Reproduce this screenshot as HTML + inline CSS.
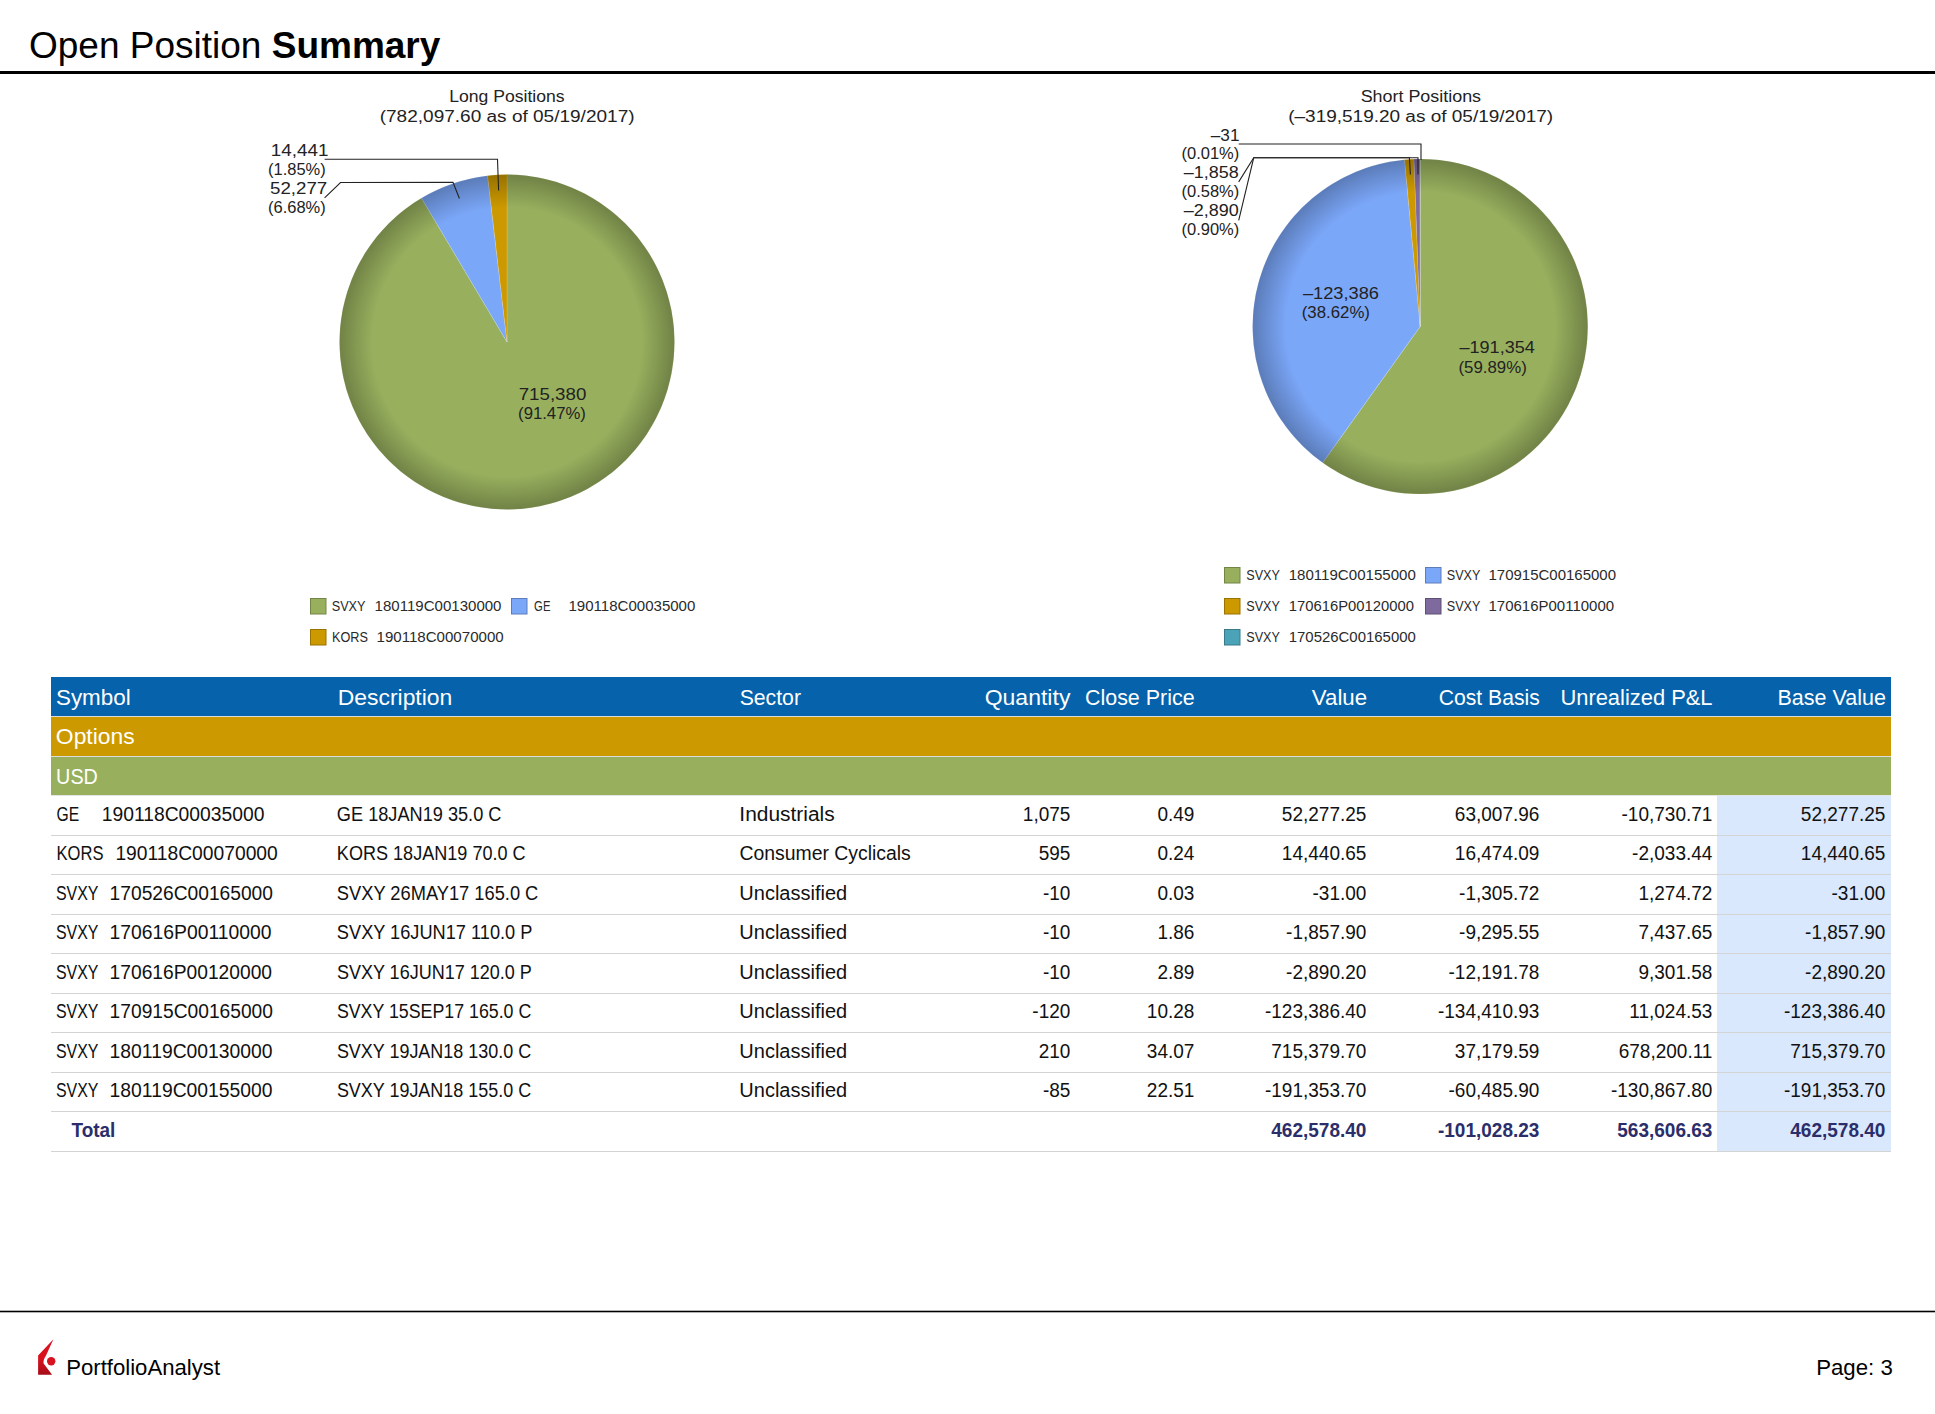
<!DOCTYPE html><html><head><meta charset="utf-8"><style>html,body{margin:0;padding:0;background:#fff;width:1935px;height:1414px;overflow:hidden}svg{display:block;font-family:"Liberation Sans",sans-serif}</style></head><body>
<svg width="1935" height="1414" viewBox="0 0 1935 1414">
<defs>
<radialGradient id="shade" cx="0.5" cy="0.5" r="0.5" gradientUnits="objectBoundingBox">
<stop offset="0" stop-color="#000" stop-opacity="0"/>
<stop offset="0.80" stop-color="#000" stop-opacity="0"/>
<stop offset="1" stop-color="#000" stop-opacity="0.26"/>
</radialGradient>
<linearGradient id="logoG" x1="0" y1="0" x2="0" y2="1">
<stop offset="0" stop-color="#d8121f"/><stop offset="0.55" stop-color="#d8121f"/><stop offset="1" stop-color="#a50d18"/>
</linearGradient>
</defs>
<text x="29" y="57.7" font-size="37" fill="#000">Open Position <tspan font-weight="bold">Summary</tspan></text>
<rect x="0" y="71" width="1935" height="3" fill="#000"/>
<text x="449.2" y="102.4" font-size="16" fill="#222" text-anchor="start" textLength="115.36" lengthAdjust="spacingAndGlyphs">Long Positions</text>
<text x="379.71" y="122.3" font-size="16" fill="#222" text-anchor="start" textLength="254.85" lengthAdjust="spacingAndGlyphs">(782,097.60 as of 05/19/2017)</text>
<path d="M507,342 L507.00,174.50 A167.5,167.5 0 1 1 421.46,197.99 Z" fill="#98b05e" stroke="rgba(255,255,255,0.22)" stroke-width="0.7"/>
<path d="M507,342 L421.46,197.99 A167.5,167.5 0 0 1 487.57,175.63 Z" fill="#7ba7f9" stroke="rgba(255,255,255,0.22)" stroke-width="0.7"/>
<path d="M507,342 L487.57,175.63 A167.5,167.5 0 0 1 507.00,174.50 Z" fill="#cc9900" stroke="rgba(255,255,255,0.22)" stroke-width="0.7"/>
<circle cx="507" cy="342" r="167.5" fill="url(#shade)"/>
<text x="518.7" y="400" font-size="17" fill="#222" text-anchor="start" textLength="67.6" lengthAdjust="spacingAndGlyphs">715,380</text>
<text x="518.12" y="419.3" font-size="17" fill="#222" text-anchor="start" textLength="67.74" lengthAdjust="spacingAndGlyphs">(91.47%)</text>
<text x="270.89" y="156" font-size="17" fill="#222" text-anchor="start" textLength="57.51" lengthAdjust="spacingAndGlyphs">14,441</text>
<text x="268.03" y="174.9" font-size="17" fill="#222" text-anchor="start" textLength="57.68" lengthAdjust="spacingAndGlyphs">(1.85%)</text>
<text x="270.0" y="194.2" font-size="17" fill="#222" text-anchor="start" textLength="57.2" lengthAdjust="spacingAndGlyphs">52,277</text>
<text x="268.03" y="212.9" font-size="17" fill="#222" text-anchor="start" textLength="57.68" lengthAdjust="spacingAndGlyphs">(6.68%)</text>
<polyline points="324.6,159.3 497.5,159.3 498.6,190.5" fill="none" stroke="#222" stroke-width="1.1"/>
<polyline points="324.6,197.8 340.5,182.5 453,182.2 459.4,198.5" fill="none" stroke="#222" stroke-width="1.1"/>
<text x="1360.68" y="102.4" font-size="16" fill="#222" text-anchor="start" textLength="120.4" lengthAdjust="spacingAndGlyphs">Short Positions</text>
<text x="1288.21" y="122.3" font-size="16" fill="#222" text-anchor="start" textLength="264.93" lengthAdjust="spacingAndGlyphs">(–319,519.20 as of 05/19/2017)</text>
<path d="M1420.2,326.5 L1420.20,158.90 A167.6,167.6 0 1 1 1322.63,462.77 Z" fill="#98b05e" stroke="rgba(255,255,255,0.22)" stroke-width="0.7"/>
<path d="M1420.2,326.5 L1322.63,462.77 A167.6,167.6 0 0 1 1404.53,159.63 Z" fill="#7ba7f9" stroke="rgba(255,255,255,0.22)" stroke-width="0.7"/>
<path d="M1420.2,326.5 L1404.53,159.63 A167.6,167.6 0 0 1 1413.99,159.02 Z" fill="#cc9900" stroke="rgba(255,255,255,0.22)" stroke-width="0.7"/>
<path d="M1420.2,326.5 L1413.99,159.02 A167.6,167.6 0 0 1 1420.09,158.90 Z" fill="#7f6a9d" stroke="rgba(255,255,255,0.22)" stroke-width="0.7"/>
<path d="M1420.2,326.5 L1420.09,158.90 A167.6,167.6 0 0 1 1420.20,158.90 Z" fill="#4ba3b8" stroke="rgba(255,255,255,0.22)" stroke-width="0.7"/>
<circle cx="1420.2" cy="326.5" r="167.6" fill="url(#shade)"/>
<text x="1302.9" y="298.6" font-size="17" fill="#222" text-anchor="start" textLength="76.07" lengthAdjust="spacingAndGlyphs">–123,386</text>
<text x="1301.71" y="317.9" font-size="17" fill="#222" text-anchor="start" textLength="68.26" lengthAdjust="spacingAndGlyphs">(38.62%)</text>
<text x="1459.5" y="352.9" font-size="17" fill="#222" text-anchor="start" textLength="75.3" lengthAdjust="spacingAndGlyphs">–191,354</text>
<text x="1458.51" y="372.7" font-size="17" fill="#222" text-anchor="start" textLength="68.26" lengthAdjust="spacingAndGlyphs">(59.89%)</text>
<text x="1210.8" y="140.5" font-size="17" fill="#222" text-anchor="start" textLength="28.67" lengthAdjust="spacingAndGlyphs">–31</text>
<text x="1181.53" y="158.7" font-size="17" fill="#222" text-anchor="start" textLength="57.68" lengthAdjust="spacingAndGlyphs">(0.01%)</text>
<text x="1183.8" y="178.2" font-size="17" fill="#222" text-anchor="start" textLength="54.9" lengthAdjust="spacingAndGlyphs">–1,858</text>
<text x="1181.53" y="196.8" font-size="17" fill="#222" text-anchor="start" textLength="57.68" lengthAdjust="spacingAndGlyphs">(0.58%)</text>
<text x="1183.8" y="216.4" font-size="17" fill="#222" text-anchor="start" textLength="54.9" lengthAdjust="spacingAndGlyphs">–2,890</text>
<text x="1181.53" y="234.8" font-size="17" fill="#222" text-anchor="start" textLength="57.68" lengthAdjust="spacingAndGlyphs">(0.90%)</text>
<polyline points="1238.7,144 1421,144 1421,160" fill="none" stroke="#222" stroke-width="1.1"/>
<polyline points="1238.7,181.9 1253.7,157.8 1418,157.8 1418,174.5" fill="none" stroke="#222" stroke-width="1.1"/>
<polyline points="1238.7,220.4 1253.7,157.8 1409.4,157.8 1410.4,174.5" fill="none" stroke="#222" stroke-width="1.1"/>
<rect x="310.5" y="598.5" width="15.5" height="15.5" fill="#98b05e" stroke="#728446" stroke-width="1"/>
<text x="331.69" y="611.3" font-size="14" fill="#2a2a2a" text-anchor="start" textLength="33.82" lengthAdjust="spacingAndGlyphs">SVXY</text>
<text x="374.63" y="611.3" font-size="14" fill="#2a2a2a" text-anchor="start" textLength="126.86" lengthAdjust="spacingAndGlyphs">180119C00130000</text>
<rect x="511.5" y="598.5" width="15.5" height="15.5" fill="#7ba7f9" stroke="#5c7dba" stroke-width="1"/>
<text x="534.1" y="611.3" font-size="14" fill="#2a2a2a" text-anchor="start" textLength="16.38" lengthAdjust="spacingAndGlyphs">GE</text>
<text x="568.42" y="611.3" font-size="14" fill="#2a2a2a" text-anchor="start" textLength="126.96" lengthAdjust="spacingAndGlyphs">190118C00035000</text>
<rect x="310.5" y="629.5" width="15.5" height="15.5" fill="#cc9900" stroke="#997200" stroke-width="1"/>
<text x="331.99" y="642.2" font-size="14" fill="#2a2a2a" text-anchor="start" textLength="35.92" lengthAdjust="spacingAndGlyphs">KORS</text>
<text x="376.52" y="642.2" font-size="14" fill="#2a2a2a" text-anchor="start" textLength="127.16" lengthAdjust="spacingAndGlyphs">190118C00070000</text>
<rect x="1224.5" y="567.5" width="15.5" height="15.5" fill="#98b05e" stroke="#728446" stroke-width="1"/>
<text x="1246.3" y="580.4" font-size="14" fill="#2a2a2a" text-anchor="start" textLength="33.62" lengthAdjust="spacingAndGlyphs">SVXY</text>
<text x="1288.72" y="580.4" font-size="14" fill="#2a2a2a" text-anchor="start" textLength="127.06" lengthAdjust="spacingAndGlyphs">180119C00155000</text>
<rect x="1425.5" y="567.5" width="15.5" height="15.5" fill="#7ba7f9" stroke="#5c7dba" stroke-width="1"/>
<text x="1446.8" y="580.4" font-size="14" fill="#2a2a2a" text-anchor="start" textLength="33.62" lengthAdjust="spacingAndGlyphs">SVXY</text>
<text x="1488.53" y="580.4" font-size="14" fill="#2a2a2a" text-anchor="start" textLength="127.49" lengthAdjust="spacingAndGlyphs">170915C00165000</text>
<rect x="1224.5" y="598.5" width="15.5" height="15.5" fill="#cc9900" stroke="#997200" stroke-width="1"/>
<text x="1246.3" y="611.1" font-size="14" fill="#2a2a2a" text-anchor="start" textLength="33.62" lengthAdjust="spacingAndGlyphs">SVXY</text>
<text x="1288.74" y="611.1" font-size="14" fill="#2a2a2a" text-anchor="start" textLength="125.22" lengthAdjust="spacingAndGlyphs">170616P00120000</text>
<rect x="1425.5" y="598.5" width="15.5" height="15.5" fill="#7f6a9d" stroke="#5f4f75" stroke-width="1"/>
<text x="1446.8" y="611.1" font-size="14" fill="#2a2a2a" text-anchor="start" textLength="33.62" lengthAdjust="spacingAndGlyphs">SVXY</text>
<text x="1488.53" y="611.1" font-size="14" fill="#2a2a2a" text-anchor="start" textLength="125.6" lengthAdjust="spacingAndGlyphs">170616P00110000</text>
<rect x="1224.5" y="629.5" width="15.5" height="15.5" fill="#4ba3b8" stroke="#387a8a" stroke-width="1"/>
<text x="1246.3" y="642.1" font-size="14" fill="#2a2a2a" text-anchor="start" textLength="33.62" lengthAdjust="spacingAndGlyphs">SVXY</text>
<text x="1288.73" y="642.1" font-size="14" fill="#2a2a2a" text-anchor="start" textLength="127.09" lengthAdjust="spacingAndGlyphs">170526C00165000</text>
<rect x="51" y="677" width="1840" height="39" fill="#0562ab"/>
<rect x="51" y="716" width="1840" height="1" fill="#dcdcdc"/>
<rect x="51" y="717" width="1840" height="39" fill="#cc9a00"/>
<rect x="51" y="756" width="1840" height="1" fill="#dcdcdc"/>
<rect x="51" y="757" width="1840" height="38" fill="#98b05e"/>
<rect x="1717" y="795" width="174" height="357" fill="#d9e8fc"/>
<rect x="51" y="835" width="1840" height="1" fill="#d4d4d4"/>
<rect x="51" y="874" width="1840" height="1" fill="#d4d4d4"/>
<rect x="51" y="914" width="1840" height="1" fill="#d4d4d4"/>
<rect x="51" y="953" width="1840" height="1" fill="#d4d4d4"/>
<rect x="51" y="993" width="1840" height="1" fill="#d4d4d4"/>
<rect x="51" y="1032" width="1840" height="1" fill="#d4d4d4"/>
<rect x="51" y="1072" width="1840" height="1" fill="#d4d4d4"/>
<rect x="51" y="1111" width="1840" height="1" fill="#d4d4d4"/>
<rect x="51" y="1151" width="1840" height="1" fill="#d4d4d4"/>
<rect x="51" y="795" width="1840" height="1" fill="#e4e4e4"/>
<text x="55.98" y="705" font-size="22" fill="#fff" text-anchor="start" textLength="74.7" lengthAdjust="spacingAndGlyphs">Symbol</text>
<text x="337.76" y="705" font-size="22" fill="#fff" text-anchor="start" textLength="114.53" lengthAdjust="spacingAndGlyphs">Description</text>
<text x="739.63" y="705" font-size="22" fill="#fff" text-anchor="start" textLength="61.36" lengthAdjust="spacingAndGlyphs">Sector</text>
<text x="984.65" y="705" font-size="22" fill="#fff" text-anchor="start" textLength="85.77" lengthAdjust="spacingAndGlyphs">Quantity</text>
<text x="1085.03" y="705" font-size="22" fill="#fff" text-anchor="start" textLength="109.54" lengthAdjust="spacingAndGlyphs">Close Price</text>
<text x="1311.8" y="705" font-size="22" fill="#fff" text-anchor="start" textLength="55.34" lengthAdjust="spacingAndGlyphs">Value</text>
<text x="1438.84" y="705" font-size="22" fill="#fff" text-anchor="start" textLength="100.9" lengthAdjust="spacingAndGlyphs">Cost Basis</text>
<text x="1560.4" y="705" font-size="22" fill="#fff" text-anchor="start" textLength="152.16" lengthAdjust="spacingAndGlyphs">Unrealized P&amp;L</text>
<text x="1777.52" y="705" font-size="22" fill="#fff" text-anchor="start" textLength="108.45" lengthAdjust="spacingAndGlyphs">Base Value</text>
<text x="55.86" y="744" font-size="22" fill="#fff" text-anchor="start" textLength="78.79" lengthAdjust="spacingAndGlyphs">Options</text>
<text x="56.1" y="784" font-size="22" fill="#fff" text-anchor="start" textLength="41.8" lengthAdjust="spacingAndGlyphs">USD</text>
<text x="56.6" y="821" font-size="19.5" fill="#111" text-anchor="start" textLength="22.64" lengthAdjust="spacingAndGlyphs">GE</text>
<text x="101.71" y="821" font-size="19.5" fill="#111" text-anchor="start" textLength="162.75" lengthAdjust="spacingAndGlyphs">190118C00035000</text>
<text x="336.87" y="821" font-size="19.5" fill="#111" text-anchor="start" textLength="164.57" lengthAdjust="spacingAndGlyphs">GE 18JAN19 35.0 C</text>
<text x="739.33" y="821" font-size="19.5" fill="#111" text-anchor="start" textLength="95.31" lengthAdjust="spacingAndGlyphs">Industrials</text>
<text x="1070.4" y="821" font-size="19.5" fill="#111" text-anchor="end" textLength="47.55" lengthAdjust="spacingAndGlyphs">1,075</text>
<text x="1194.4" y="821" font-size="19.5" fill="#111" text-anchor="end" textLength="36.98" lengthAdjust="spacingAndGlyphs">0.49</text>
<text x="1366.4" y="821" font-size="19.5" fill="#111" text-anchor="end" textLength="84.53" lengthAdjust="spacingAndGlyphs">52,277.25</text>
<text x="1539.4" y="821" font-size="19.5" fill="#111" text-anchor="end" textLength="84.53" lengthAdjust="spacingAndGlyphs">63,007.96</text>
<text x="1712.4" y="821" font-size="19.5" fill="#111" text-anchor="end" textLength="90.85" lengthAdjust="spacingAndGlyphs">-10,730.71</text>
<text x="1885.4" y="821" font-size="19.5" fill="#111" text-anchor="end" textLength="84.53" lengthAdjust="spacingAndGlyphs">52,277.25</text>
<text x="56.55" y="860" font-size="19.5" fill="#111" text-anchor="start" textLength="46.97" lengthAdjust="spacingAndGlyphs">KORS</text>
<text x="115.41" y="860" font-size="19.5" fill="#111" text-anchor="start" textLength="162.35" lengthAdjust="spacingAndGlyphs">190118C00070000</text>
<text x="336.87" y="860" font-size="19.5" fill="#111" text-anchor="start" textLength="188.74" lengthAdjust="spacingAndGlyphs">KORS 18JAN19 70.0 C</text>
<text x="739.41" y="860" font-size="19.5" fill="#111" text-anchor="start" textLength="171.38" lengthAdjust="spacingAndGlyphs">Consumer Cyclicals</text>
<text x="1070.4" y="860" font-size="19.5" fill="#111" text-anchor="end" textLength="31.7" lengthAdjust="spacingAndGlyphs">595</text>
<text x="1194.4" y="860" font-size="19.5" fill="#111" text-anchor="end" textLength="36.98" lengthAdjust="spacingAndGlyphs">0.24</text>
<text x="1366.4" y="860" font-size="19.5" fill="#111" text-anchor="end" textLength="84.53" lengthAdjust="spacingAndGlyphs">14,440.65</text>
<text x="1539.4" y="860" font-size="19.5" fill="#111" text-anchor="end" textLength="84.53" lengthAdjust="spacingAndGlyphs">16,474.09</text>
<text x="1712.4" y="860" font-size="19.5" fill="#111" text-anchor="end" textLength="80.29" lengthAdjust="spacingAndGlyphs">-2,033.44</text>
<text x="1885.4" y="860" font-size="19.5" fill="#111" text-anchor="end" textLength="84.53" lengthAdjust="spacingAndGlyphs">14,440.65</text>
<text x="55.98" y="900" font-size="19.5" fill="#111" text-anchor="start" textLength="42.54" lengthAdjust="spacingAndGlyphs">SVXY</text>
<text x="109.62" y="900" font-size="19.5" fill="#111" text-anchor="start" textLength="163.38" lengthAdjust="spacingAndGlyphs">170526C00165000</text>
<text x="336.86" y="900" font-size="19.5" fill="#111" text-anchor="start" textLength="201.46" lengthAdjust="spacingAndGlyphs">SVXY 26MAY17 165.0 C</text>
<text x="739.37" y="900" font-size="19.5" fill="#111" text-anchor="start" textLength="107.78" lengthAdjust="spacingAndGlyphs">Unclassified</text>
<text x="1070.4" y="900" font-size="19.5" fill="#111" text-anchor="end" textLength="27.46" lengthAdjust="spacingAndGlyphs">-10</text>
<text x="1194.4" y="900" font-size="19.5" fill="#111" text-anchor="end" textLength="36.98" lengthAdjust="spacingAndGlyphs">0.03</text>
<text x="1366.4" y="900" font-size="19.5" fill="#111" text-anchor="end" textLength="53.87" lengthAdjust="spacingAndGlyphs">-31.00</text>
<text x="1539.4" y="900" font-size="19.5" fill="#111" text-anchor="end" textLength="80.29" lengthAdjust="spacingAndGlyphs">-1,305.72</text>
<text x="1712.4" y="900" font-size="19.5" fill="#111" text-anchor="end" textLength="73.96" lengthAdjust="spacingAndGlyphs">1,274.72</text>
<text x="1885.4" y="900" font-size="19.5" fill="#111" text-anchor="end" textLength="53.87" lengthAdjust="spacingAndGlyphs">-31.00</text>
<text x="55.98" y="939" font-size="19.5" fill="#111" text-anchor="start" textLength="42.54" lengthAdjust="spacingAndGlyphs">SVXY</text>
<text x="109.61" y="939" font-size="19.5" fill="#111" text-anchor="start" textLength="161.98" lengthAdjust="spacingAndGlyphs">170616P00110000</text>
<text x="336.87" y="939" font-size="19.5" fill="#111" text-anchor="start" textLength="195.5" lengthAdjust="spacingAndGlyphs">SVXY 16JUN17 110.0 P</text>
<text x="739.37" y="939" font-size="19.5" fill="#111" text-anchor="start" textLength="107.78" lengthAdjust="spacingAndGlyphs">Unclassified</text>
<text x="1070.4" y="939" font-size="19.5" fill="#111" text-anchor="end" textLength="27.46" lengthAdjust="spacingAndGlyphs">-10</text>
<text x="1194.4" y="939" font-size="19.5" fill="#111" text-anchor="end" textLength="36.98" lengthAdjust="spacingAndGlyphs">1.86</text>
<text x="1366.4" y="939" font-size="19.5" fill="#111" text-anchor="end" textLength="80.29" lengthAdjust="spacingAndGlyphs">-1,857.90</text>
<text x="1539.4" y="939" font-size="19.5" fill="#111" text-anchor="end" textLength="80.29" lengthAdjust="spacingAndGlyphs">-9,295.55</text>
<text x="1712.4" y="939" font-size="19.5" fill="#111" text-anchor="end" textLength="73.96" lengthAdjust="spacingAndGlyphs">7,437.65</text>
<text x="1885.4" y="939" font-size="19.5" fill="#111" text-anchor="end" textLength="80.29" lengthAdjust="spacingAndGlyphs">-1,857.90</text>
<text x="55.98" y="979" font-size="19.5" fill="#111" text-anchor="start" textLength="42.54" lengthAdjust="spacingAndGlyphs">SVXY</text>
<text x="109.61" y="979" font-size="19.5" fill="#111" text-anchor="start" textLength="162.41" lengthAdjust="spacingAndGlyphs">170616P00120000</text>
<text x="336.88" y="979" font-size="19.5" fill="#111" text-anchor="start" textLength="194.97" lengthAdjust="spacingAndGlyphs">SVXY 16JUN17 120.0 P</text>
<text x="739.37" y="979" font-size="19.5" fill="#111" text-anchor="start" textLength="107.78" lengthAdjust="spacingAndGlyphs">Unclassified</text>
<text x="1070.4" y="979" font-size="19.5" fill="#111" text-anchor="end" textLength="27.46" lengthAdjust="spacingAndGlyphs">-10</text>
<text x="1194.4" y="979" font-size="19.5" fill="#111" text-anchor="end" textLength="36.98" lengthAdjust="spacingAndGlyphs">2.89</text>
<text x="1366.4" y="979" font-size="19.5" fill="#111" text-anchor="end" textLength="80.29" lengthAdjust="spacingAndGlyphs">-2,890.20</text>
<text x="1539.4" y="979" font-size="19.5" fill="#111" text-anchor="end" textLength="90.85" lengthAdjust="spacingAndGlyphs">-12,191.78</text>
<text x="1712.4" y="979" font-size="19.5" fill="#111" text-anchor="end" textLength="73.96" lengthAdjust="spacingAndGlyphs">9,301.58</text>
<text x="1885.4" y="979" font-size="19.5" fill="#111" text-anchor="end" textLength="80.29" lengthAdjust="spacingAndGlyphs">-2,890.20</text>
<text x="55.98" y="1018" font-size="19.5" fill="#111" text-anchor="start" textLength="42.54" lengthAdjust="spacingAndGlyphs">SVXY</text>
<text x="109.62" y="1018" font-size="19.5" fill="#111" text-anchor="start" textLength="163.38" lengthAdjust="spacingAndGlyphs">170915C00165000</text>
<text x="336.89" y="1018" font-size="19.5" fill="#111" text-anchor="start" textLength="194.42" lengthAdjust="spacingAndGlyphs">SVXY 15SEP17 165.0 C</text>
<text x="739.37" y="1018" font-size="19.5" fill="#111" text-anchor="start" textLength="107.78" lengthAdjust="spacingAndGlyphs">Unclassified</text>
<text x="1070.4" y="1018" font-size="19.5" fill="#111" text-anchor="end" textLength="38.03" lengthAdjust="spacingAndGlyphs">-120</text>
<text x="1194.4" y="1018" font-size="19.5" fill="#111" text-anchor="end" textLength="47.55" lengthAdjust="spacingAndGlyphs">10.28</text>
<text x="1366.4" y="1018" font-size="19.5" fill="#111" text-anchor="end" textLength="101.42" lengthAdjust="spacingAndGlyphs">-123,386.40</text>
<text x="1539.4" y="1018" font-size="19.5" fill="#111" text-anchor="end" textLength="101.42" lengthAdjust="spacingAndGlyphs">-134,410.93</text>
<text x="1712.4" y="1018" font-size="19.5" fill="#111" text-anchor="end" textLength="83.12" lengthAdjust="spacingAndGlyphs">11,024.53</text>
<text x="1885.4" y="1018" font-size="19.5" fill="#111" text-anchor="end" textLength="101.42" lengthAdjust="spacingAndGlyphs">-123,386.40</text>
<text x="55.98" y="1058" font-size="19.5" fill="#111" text-anchor="start" textLength="42.54" lengthAdjust="spacingAndGlyphs">SVXY</text>
<text x="109.61" y="1058" font-size="19.5" fill="#111" text-anchor="start" textLength="162.95" lengthAdjust="spacingAndGlyphs">180119C00130000</text>
<text x="336.88" y="1058" font-size="19.5" fill="#111" text-anchor="start" textLength="194.27" lengthAdjust="spacingAndGlyphs">SVXY 19JAN18 130.0 C</text>
<text x="739.37" y="1058" font-size="19.5" fill="#111" text-anchor="start" textLength="107.78" lengthAdjust="spacingAndGlyphs">Unclassified</text>
<text x="1070.4" y="1058" font-size="19.5" fill="#111" text-anchor="end" textLength="31.7" lengthAdjust="spacingAndGlyphs">210</text>
<text x="1194.4" y="1058" font-size="19.5" fill="#111" text-anchor="end" textLength="47.55" lengthAdjust="spacingAndGlyphs">34.07</text>
<text x="1366.4" y="1058" font-size="19.5" fill="#111" text-anchor="end" textLength="95.09" lengthAdjust="spacingAndGlyphs">715,379.70</text>
<text x="1539.4" y="1058" font-size="19.5" fill="#111" text-anchor="end" textLength="84.53" lengthAdjust="spacingAndGlyphs">37,179.59</text>
<text x="1712.4" y="1058" font-size="19.5" fill="#111" text-anchor="end" textLength="93.68" lengthAdjust="spacingAndGlyphs">678,200.11</text>
<text x="1885.4" y="1058" font-size="19.5" fill="#111" text-anchor="end" textLength="95.09" lengthAdjust="spacingAndGlyphs">715,379.70</text>
<text x="55.98" y="1097" font-size="19.5" fill="#111" text-anchor="start" textLength="42.54" lengthAdjust="spacingAndGlyphs">SVXY</text>
<text x="109.61" y="1097" font-size="19.5" fill="#111" text-anchor="start" textLength="162.95" lengthAdjust="spacingAndGlyphs">180119C00155000</text>
<text x="336.88" y="1097" font-size="19.5" fill="#111" text-anchor="start" textLength="194.27" lengthAdjust="spacingAndGlyphs">SVXY 19JAN18 155.0 C</text>
<text x="739.37" y="1097" font-size="19.5" fill="#111" text-anchor="start" textLength="107.78" lengthAdjust="spacingAndGlyphs">Unclassified</text>
<text x="1070.4" y="1097" font-size="19.5" fill="#111" text-anchor="end" textLength="27.46" lengthAdjust="spacingAndGlyphs">-85</text>
<text x="1194.4" y="1097" font-size="19.5" fill="#111" text-anchor="end" textLength="47.55" lengthAdjust="spacingAndGlyphs">22.51</text>
<text x="1366.4" y="1097" font-size="19.5" fill="#111" text-anchor="end" textLength="101.42" lengthAdjust="spacingAndGlyphs">-191,353.70</text>
<text x="1539.4" y="1097" font-size="19.5" fill="#111" text-anchor="end" textLength="90.85" lengthAdjust="spacingAndGlyphs">-60,485.90</text>
<text x="1712.4" y="1097" font-size="19.5" fill="#111" text-anchor="end" textLength="101.42" lengthAdjust="spacingAndGlyphs">-130,867.80</text>
<text x="1885.4" y="1097" font-size="19.5" fill="#111" text-anchor="end" textLength="101.42" lengthAdjust="spacingAndGlyphs">-191,353.70</text>
<text x="71.5" y="1137" font-size="19.5" fill="#2b2e6a" text-anchor="start" font-weight="bold" textLength="43.9" lengthAdjust="spacingAndGlyphs">Total</text>
<text x="1366.4" y="1137" font-size="19.5" fill="#2b2e6a" text-anchor="end" font-weight="bold" textLength="95.09" lengthAdjust="spacingAndGlyphs">462,578.40</text>
<text x="1539.4" y="1137" font-size="19.5" fill="#2b2e6a" text-anchor="end" font-weight="bold" textLength="101.42" lengthAdjust="spacingAndGlyphs">-101,028.23</text>
<text x="1712.4" y="1137" font-size="19.5" fill="#2b2e6a" text-anchor="end" font-weight="bold" textLength="95.09" lengthAdjust="spacingAndGlyphs">563,606.63</text>
<text x="1885.4" y="1137" font-size="19.5" fill="#2b2e6a" text-anchor="end" font-weight="bold" textLength="95.09" lengthAdjust="spacingAndGlyphs">462,578.40</text>
<rect x="0" y="1310.7" width="1935" height="1.6" fill="#000"/>
<path d="M53.4,1339.3 L38.1,1355.4 L38.1,1374.8 L52.1,1374.8 L43.6,1363.6 Q43,1360 45.9,1355.8 Z" fill="url(#logoG)"/>
<circle cx="51.2" cy="1361.2" r="4.2" fill="#d8121f"/>
<text x="66.19" y="1374.8" font-size="22" fill="#000" text-anchor="start" textLength="153.86" lengthAdjust="spacingAndGlyphs">PortfolioAnalyst</text>
<text x="1816.19" y="1375" font-size="22" fill="#000" text-anchor="start" textLength="76.56" lengthAdjust="spacingAndGlyphs">Page: 3</text>
</svg></body></html>
